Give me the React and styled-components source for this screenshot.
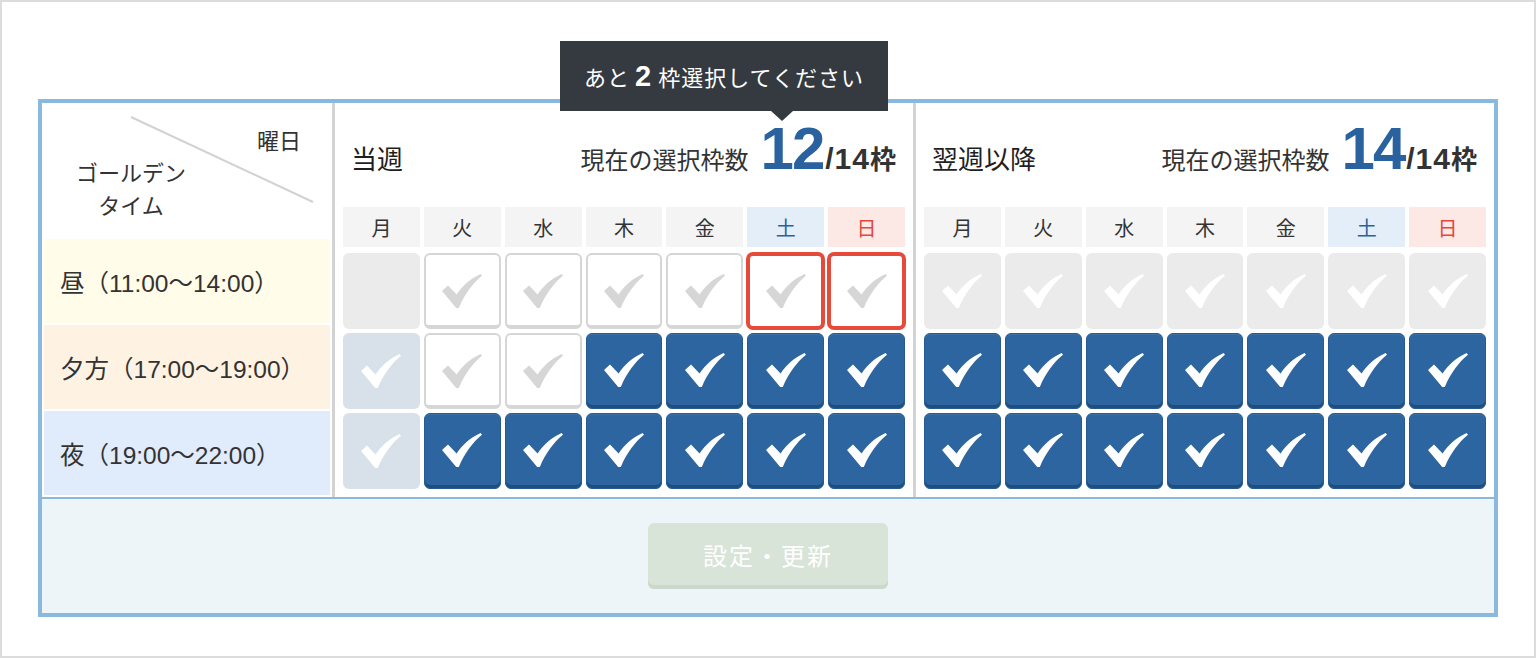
import React from 'react';
import styled, { createGlobalStyle, css } from 'styled-components';

const GlobalStyle = createGlobalStyle`
  html, body { margin: 0; padding: 0; background: #fff; }
  body { font-family: "Noto Sans CJK JP", "Noto Sans", sans-serif; color: #333; }
  * { box-sizing: border-box; }
`;

const BLUE = '#8ab9dd';

const Page = styled.div`
  width: 1536px;
  height: 658px;
  border: 2px solid #dcdcdc;
  padding: 97px 36px 0;
  background: #fff;
`;

const Board = styled.div`
  width: 1460px;
  border: 4px solid ${BLUE};
  background: #fff;
`;

const Grid = styled.div`
  display: grid;
  grid-template-columns: 290px 3px 1fr 3px 1fr;
  height: 394px;
`;

const Divider = styled.div`
  background: #d3d3d3;
`;

const LabelCol = styled.div`
  display: flex;
  flex-direction: column;
  padding: 2px;
  gap: 2px;
`;

const Corner = styled.div`
  flex: 1;
  position: relative;
  padding-top: 18px;
  font-size: 22px;
  color: #333;
`;

const Diagonal = styled.svg`
  position: absolute;
  inset: 0;
  width: 100%;
  height: 100%;
`;

const WeekdayLabel = styled.div`
  line-height: 33px;
  text-align: right;
  padding-right: 29px;
`;

const TimeLabel = styled.div`
  width: 174px;
  margin-top: -1px;
  line-height: 33px;
  text-align: center;
`;

const RowLabel = styled.div`
  height: 84px;
  display: flex;
  align-items: center;
  padding-left: 16px;
  font-family: "Liberation Sans", "Noto Sans CJK JP", sans-serif;
  font-size: 24.5px;
  color: #333;
  background: ${(p) => p.$bg};
`;

const Section = styled.div`
  position: relative;
  padding: 0 8px;
`;

const SectionHeader = styled.div`
  height: 104px;
  display: flex;
  align-items: baseline;
  justify-content: space-between;
  padding: 16px 9px 0 8px;
`;

const Title = styled.div`
  font-size: 26px;
  line-height: 1;
  color: #1f1f1f;
`;

const Count = styled.div`
  display: flex;
  align-items: baseline;
`;

const CountLabel = styled.span`
  font-size: 24px;
  line-height: 1;
  color: #333;
  margin-right: 12px;
`;

const BigNum = styled.span`
  font-family: "Liberation Sans", Arial, sans-serif;
  font-weight: 700;
  font-size: 60px;
  line-height: 1;
  letter-spacing: -2px;
  color: #2a62a0;
`;

const Suffix = styled.span`
  font-family: "Liberation Sans", Arial, sans-serif;
  font-weight: 700;
  font-size: 30px;
  line-height: 1;
  letter-spacing: 1px;
  color: #333;
  margin-left: 2px;
`;

const Unit = styled.span`
  font-family: "Noto Sans CJK JP", sans-serif;
  font-weight: 700;
  font-size: 26px;
  line-height: 1;
  color: #333;
`;

const Tooltip = styled.div`
  position: absolute;
  left: 225px;
  top: -62px;
  width: 328px;
  height: 70px;
  background: #343a3f;
  color: #fff;
  display: flex;
  align-items: center;
  justify-content: center;
  font-size: 22px;
  letter-spacing: 1px;
  z-index: 2;
  &::after {
    content: '';
    position: absolute;
    left: 211px;
    bottom: -10px;
    border-left: 11px solid transparent;
    border-right: 11px solid transparent;
    border-top: 10px solid #343a3f;
  }
`;

const TipNum = styled.b`
  font-family: "Liberation Sans", Arial, sans-serif;
  font-size: 29px;
  margin: 0 6px 0 5px;
`;

const Days = styled.div`
  display: grid;
  grid-template-columns: repeat(7, 1fr);
  gap: 4px;
  height: 40px;
  margin-bottom: 6px;
`;

const dayTones = {
  normal: { bg: '#f4f4f4', fg: '#333' },
  sat: { bg: '#e3eef8', fg: '#2a62a0' },
  sun: { bg: '#fce9e6', fg: '#e5473a' },
};

const DayCell = styled.div`
  display: flex;
  align-items: center;
  justify-content: center;
  font-size: 20px;
  background: ${(p) => dayTones[p.$tone].bg};
  color: ${(p) => dayTones[p.$tone].fg};
`;

const Slots = styled.div`
  display: grid;
  grid-template-columns: repeat(7, 1fr);
  grid-auto-rows: 76px;
  gap: 4px;
`;

const slotStyles = {
  empty: css`
    background: #ebebeb;
  `,
  off: css`
    background: #d8e1e9;
    color: #fff;
  `,
  closed: css`
    background: #ebebeb;
    color: #fff;
  `,
  open: css`
    background: #fff;
    border: 2px solid #d6d6d6;
    border-bottom-width: 4px;
    color: #d6d6d6;
    padding-top: 2px;
  `,
  alert: css`
    background: #fff;
    border: 3px solid #e64a3b;
    box-shadow: 0 0 0 1px #e64a3b;
    color: #d6d6d6;
  `,
  on: css`
    background: #2c659f;
    border: 1px solid #265b91;
    box-shadow: inset 0 -3px 0 #1f4e7e, inset 0 1px 0 rgba(255, 255, 255, 0.08);
    color: #fff;
    padding-bottom: 2px;
  `,
};

const Slot = styled.div`
  border-radius: 6px;
  display: flex;
  align-items: center;
  justify-content: center;
  ${(p) => slotStyles[p.$state]}
`;

const Footer = styled.div`
  height: 116px;
  border-top: 2px solid ${BLUE};
  background: #edf5f9;
  display: flex;
  align-items: center;
  justify-content: center;
`;

const SubmitButton = styled.button`
  width: 240px;
  height: 66px;
  border: none;
  border-radius: 6px;
  background: #d9e4d9;
  box-shadow: inset 0 -4px 0 #ccd8cb;
  color: #fff;
  font-family: "Noto Sans CJK JP", sans-serif;
  font-size: 24px;
  letter-spacing: 2px;
  padding: 0 0 4px;
  cursor: default;
`;

const Check = () => (
  <svg width="40" height="34" viewBox="0 0 40 34" fill="currentColor" aria-hidden="true">
    <path d="M0 17 L6 11.4 L14.6 20.4 C20.5 11.8 28 4.8 38.6 0 L40 1.8 C30.5 9.6 22.8 20 16.8 34 L14.2 34 Z" />
  </svg>
);

const DAYS = [
  ['月', 'normal'],
  ['火', 'normal'],
  ['水', 'normal'],
  ['木', 'normal'],
  ['金', 'normal'],
  ['土', 'sat'],
  ['日', 'sun'],
];

const ROWS = [
  { label: '昼（11:00〜14:00）', bg: '#fffde9' },
  { label: '夕方（17:00〜19:00）', bg: '#fef2e3' },
  { label: '夜（19:00〜22:00）', bg: '#e0ebfb' },
];

const thisWeek = [
  ['empty', 'open', 'open', 'open', 'open', 'alert', 'alert'],
  ['off', 'open', 'open', 'on', 'on', 'on', 'on'],
  ['off', 'on', 'on', 'on', 'on', 'on', 'on'],
];

const nextWeek = [
  Array(7).fill('closed'),
  Array(7).fill('on'),
  Array(7).fill('on'),
];

const Week = ({ title, count, slots, tip }) => (
  <Section>
    {tip && (
      <Tooltip>
        あと<TipNum>2</TipNum>枠選択してください
      </Tooltip>
    )}
    <SectionHeader>
      <Title>{title}</Title>
      <Count>
        <CountLabel>現在の選択枠数</CountLabel>
        <BigNum>{count}</BigNum>
        <Suffix>/14</Suffix>
        <Unit>枠</Unit>
      </Count>
    </SectionHeader>
    <Days>
      {DAYS.map(([d, tone]) => (
        <DayCell key={d} $tone={tone}>
          {d}
        </DayCell>
      ))}
    </Days>
    <Slots>
      {slots.flat().map((s, i) => (
        <Slot key={i} $state={s}>
          {s !== 'empty' && <Check />}
        </Slot>
      ))}
    </Slots>
  </Section>
);

export default function App() {
  return (
    <>
      <GlobalStyle />
      <Page>
        <Board>
          <Grid>
            <LabelCol>
              <Corner>
                <Diagonal>
                  <line x1="87" y1="12" x2="269" y2="97" stroke="#d2d2d2" strokeWidth="2" />
                </Diagonal>
                <WeekdayLabel>曜日</WeekdayLabel>
                <TimeLabel>
                  ゴールデン
                  <br />
                  タイム
                </TimeLabel>
              </Corner>
              {ROWS.map((r) => (
                <RowLabel key={r.label} $bg={r.bg}>
                  {r.label}
                </RowLabel>
              ))}
            </LabelCol>
            <Divider />
            <Week title="当週" count="12" slots={thisWeek} tip />
            <Divider />
            <Week title="翌週以降" count="14" slots={nextWeek} />
          </Grid>
          <Footer>
            <SubmitButton type="button">設定・更新</SubmitButton>
          </Footer>
        </Board>
      </Page>
    </>
  );
}
